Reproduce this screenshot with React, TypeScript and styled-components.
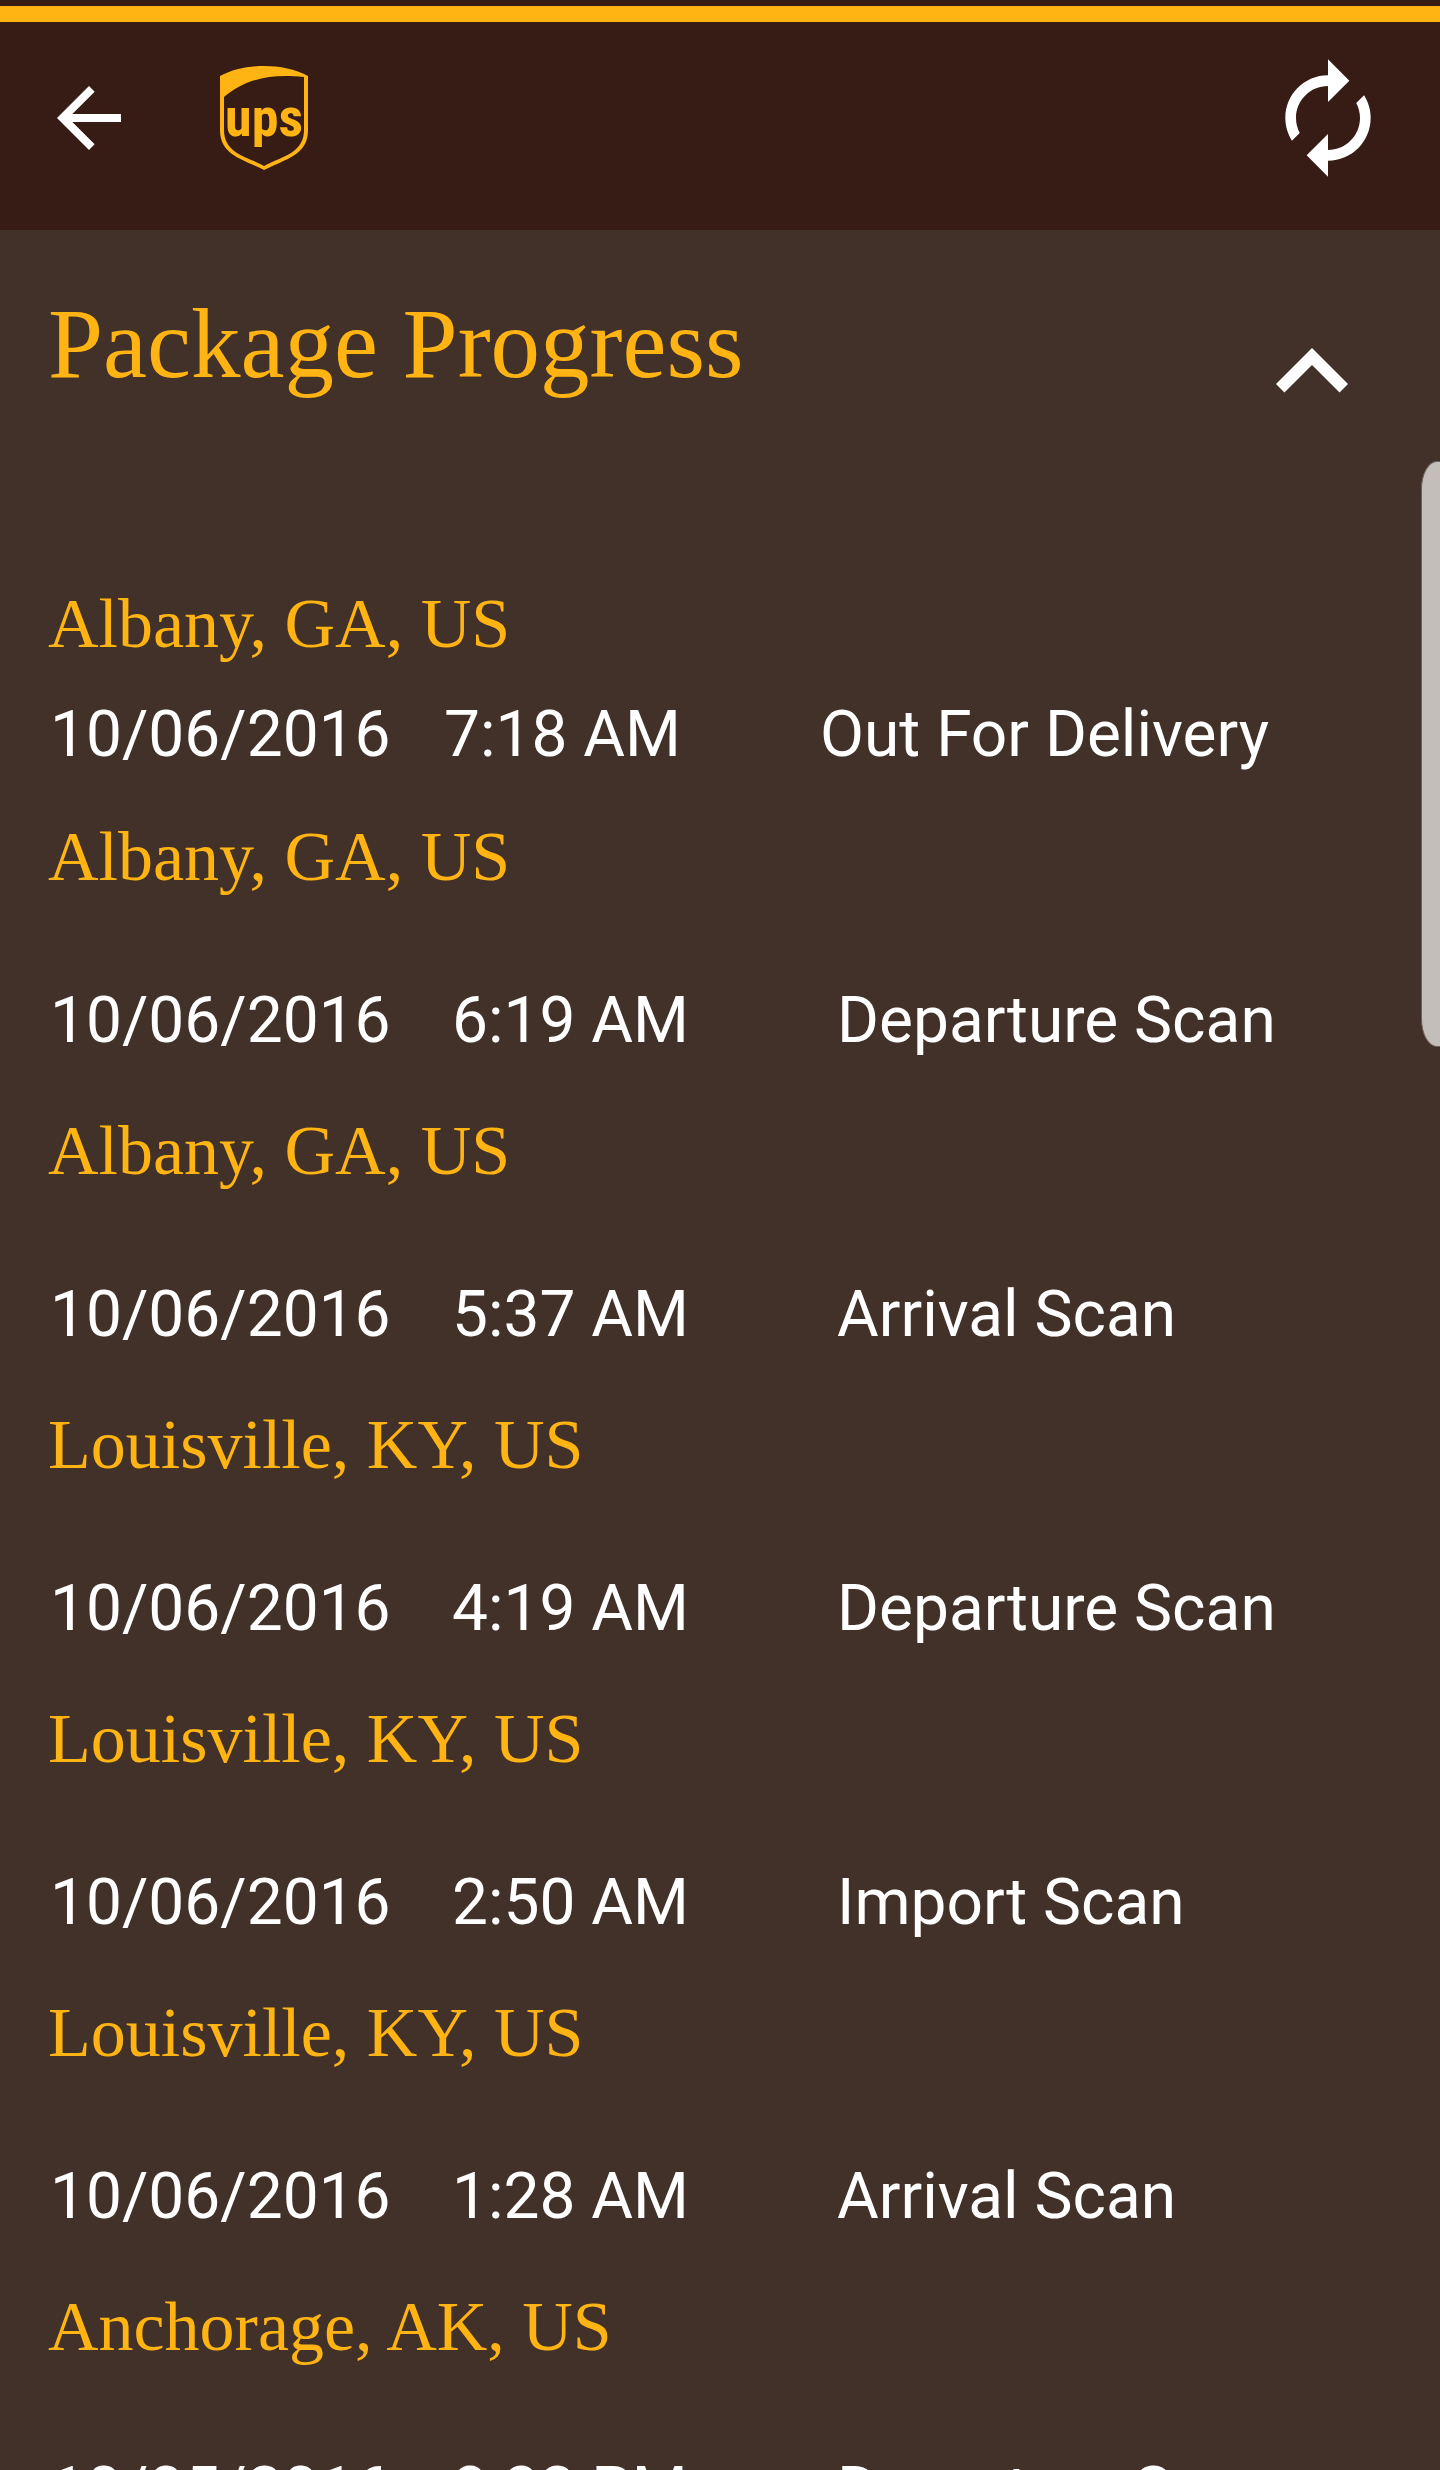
import React, { useState } from "react";
import styled, { createGlobalStyle, css } from "styled-components";

const colors = {
  header: "#361c15",
  page: "#423128",
  gold: "#ffb414",
  white: "#ffffff",
  thumb: "#c4bebb",
  thumbEdge: "#6e625b",
};

const serif = `"Liberation Serif", "Times New Roman", serif`;
const sans = `Roboto, "Noto Sans", sans-serif`;

const GlobalStyle = createGlobalStyle`
  *, *::before, *::after { box-sizing: border-box; }
  body { margin: 0; background: ${colors.page}; }
`;

const Screen = styled.div`
  position: relative;
  display: flex;
  flex-direction: column;
  height: 100vh;
  overflow: hidden;
  background: ${colors.page};
  color: ${colors.white};
  font-family: ${sans};
`;

const Header = styled.header`
  flex: none;
  padding-top: 6px;
  background: ${colors.header};
`;

const Stripe = styled.div`
  height: 16px;
  background: ${colors.gold};
`;

const Toolbar = styled.div`
  display: flex;
  align-items: center;
  height: 208px;
  padding: 0 48px 16px 41px;
`;

const IconButton = styled.button<{ $size: number; $end?: boolean }>`
  flex: none;
  display: block;
  width: ${(p) => p.$size}px;
  height: ${(p) => p.$size}px;
  padding: 0;
  border: 0;
  background: none;
  color: inherit;
  cursor: pointer;
  ${(p) => p.$end && css`margin-left: auto;`}

  svg {
    display: block;
    width: 100%;
    height: 100%;
    fill: currentColor;
  }
`;

const Logo = styled.svg`
  flex: none;
  width: 88px;
  height: 104px;
  margin-left: 83px;
  fill: ${colors.gold};

  text {
    font-family: "Liberation Sans Narrow", "Roboto Condensed", Roboto, sans-serif;
    font-size: 54px;
    font-weight: 700;
    text-anchor: middle;
  }
`;

const Content = styled.main`
  flex: 1;
  min-height: 0;
  overflow-y: auto;
  scrollbar-width: none;
`;

const SectionHeader = styled.div`
  display: flex;
  align-items: flex-end;
  height: 214px;
  padding: 0 56px 0 48px;
`;

const Title = styled.h1`
  align-self: flex-start;
  margin: 0;
  padding-top: 58px;
  color: ${colors.gold};
  font: 400 99px/112px ${serif};
`;

const Events = styled.ul`
  margin: 0;
  padding: 140px 46px 0 48px;
  list-style: none;
`;

const Event = styled.li<{ $compact: boolean }>`
  display: flex;
  flex-direction: column;
  gap: ${(p) => (p.$compact ? 31 : 84)}px;
  padding-bottom: ${(p) => (p.$compact ? 42 : 50)}px;
`;

const Location = styled.h2`
  margin: 0;
  color: ${colors.gold};
  font: 400 70px/80px ${serif};
`;

const Details = styled.div<{ $compact: boolean }>`
  display: grid;
  grid-template-columns: ${(p) =>
    p.$compact ? "394fr 376fr 574fr" : "402fr 385fr 557fr"};
  padding-left: 2px;
  font-size: 64px;
  font-weight: 450;
  line-height: 80px;
  white-space: nowrap;
`;

const ScrollThumb = styled.div`
  position: absolute;
  top: 461px;
  right: 0;
  width: 19px;
  height: 586px;
  border: 1px solid ${colors.thumbEdge};
  border-right: 0;
  border-radius: 16px 0 0 16px / 28px 0 0 28px;
  background: ${colors.thumb};
`;

type Scan = { location: string; date: string; time: string; status: string };

const scans: Scan[] = [
  { location: "Albany, GA, US", date: "10/06/2016", time: "7:18 AM", status: "Out For Delivery" },
  { location: "Albany, GA, US", date: "10/06/2016", time: "6:19 AM", status: "Departure Scan" },
  { location: "Albany, GA, US", date: "10/06/2016", time: "5:37 AM", status: "Arrival Scan" },
  { location: "Louisville, KY, US", date: "10/06/2016", time: "4:19 AM", status: "Departure Scan" },
  { location: "Louisville, KY, US", date: "10/06/2016", time: "2:50 AM", status: "Import Scan" },
  { location: "Louisville, KY, US", date: "10/06/2016", time: "1:28 AM", status: "Arrival Scan" },
  { location: "Anchorage, AK, US", date: "10/05/2016", time: "8:32 PM", status: "Departure Scan" },
];

function UpsLogo() {
  return (
    <Logo viewBox="0 0 88 104" role="img" aria-label="UPS">
      <path
        fillRule="evenodd"
        d="M0 10C13 3 28 0 44 0s31 3 44 10v54c0 12-5 20-15 26-6 4-19 9-29 14-10-5-23-10-29-14C5 84 0 76 0 64zM4 31v33c0 10 4 17 13 23 6 4 18 8 27 13 9-5 21-9 27-13 9-6 13-13 13-23V11C50 8 28 12 4 31z"
      />
      <text x="44" y="70">ups</text>
    </Logo>
  );
}

export default function App() {
  const [open, setOpen] = useState(true);

  return (
    <Screen>
      <GlobalStyle />
      <Header>
        <Stripe />
        <Toolbar>
          <IconButton $size={96} type="button" aria-label="Back">
            <svg viewBox="0 0 24 24">
              <path d="M20 11H7.83l5.59-5.59L12 4l-8 8 8 8 1.41-1.41L7.83 13H20v-2z" />
            </svg>
          </IconButton>
          <UpsLogo />
          <IconButton $size={128} $end type="button" aria-label="Refresh">
            <svg viewBox="0 0 24 24">
              <path d="M12 6v3l4-4-4-4v3c-4.42 0-8 3.58-8 8 0 1.57.46 3.03 1.24 4.26L6.7 14.8c-.45-.83-.7-1.79-.7-2.8 0-3.31 2.69-6 6-6zm6.76 1.74L17.3 9.2c.44.84.7 1.79.7 2.8 0 3.31-2.69 6-6 6v-3l-4 4 4 4v-3c4.42 0 8-3.58 8-8 0-1.57-.46-3.03-1.24-4.26z" />
            </svg>
          </IconButton>
        </Toolbar>
      </Header>
      <Content>
        <SectionHeader>
          <Title>Package Progress</Title>
          <IconButton
            $size={144}
            $end
            type="button"
            aria-label="Toggle package progress"
            aria-expanded={open}
            onClick={() => setOpen(!open)}
          >
            <svg viewBox="0 0 24 24">
              <path d="M12 8l-6 6 1.41 1.41L12 10.83l4.59 4.58L18 14z" />
            </svg>
          </IconButton>
        </SectionHeader>
        {open && (
          <Events>
            {scans.map((scan, i) => (
              <Event key={scan.date + scan.time} $compact={i === 0}>
                <Location>{scan.location}</Location>
                <Details $compact={i === 0}>
                  <span>{scan.date}</span>
                  <span>{scan.time}</span>
                  <span>{scan.status}</span>
                </Details>
              </Event>
            ))}
          </Events>
        )}
      </Content>
      <ScrollThumb />
    </Screen>
  );
}
